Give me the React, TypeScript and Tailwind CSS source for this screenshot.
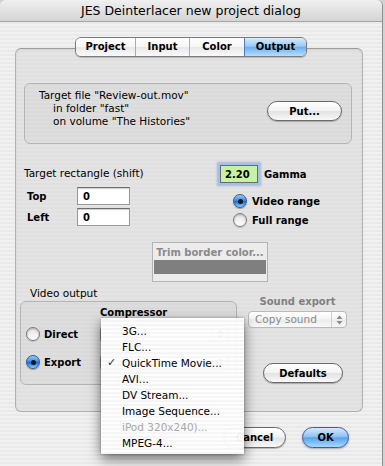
import React from "react";

function Arrows({ color = "#222" }: { color?: string }) {
  return (
    <svg width="7" height="10" viewBox="0 0 7 10">
      <path d="M3.5 0.5 L6.5 4 L0.5 4 Z" fill={color} />
      <path d="M3.5 9.5 L6.5 6 L0.5 6 Z" fill={color} />
    </svg>
  );
}

function Radio({ on }: { on: boolean }) {
  if (on) {
    return (
      <span className="relative shrink-0 w-[14px] h-[14px] rounded-full border border-[#2f5a96] bg-[linear-gradient(180deg,#9ccaf5_0%,#3f8fe6_45%,#1d6bd6_55%,#8cd0ff_100%)] shadow-[0_1px_1px_rgba(0,0,0,0.3)] flex items-center justify-center">
        <span className="w-[5px] h-[5px] rounded-full bg-[#101820]" />
      </span>
    );
  }
  return (
    <span className="shrink-0 w-[14px] h-[14px] rounded-full border border-[#7c7c7c] bg-[linear-gradient(180deg,#e4e4e4,#ffffff)] shadow-[inset_0_1px_2px_rgba(0,0,0,0.25),0_1px_1px_rgba(0,0,0,0.15)]" />
  );
}

function Field({ children }: { children: React.ReactNode }) {
  return (
    <div className="w-[53px] h-[18px] bg-white border border-[#9a9a9a] border-t-[#6e6e6e] shadow-[inset_0_1px_1px_rgba(0,0,0,0.2)] flex items-center pl-[5px] text-[10px] font-bold">
      {children}
    </div>
  );
}

const menuItems: { t: string; check?: boolean; dis?: boolean }[] = [
  { t: "3G..." },
  { t: "FLC..." },
  { t: "QuickTime Movie...", check: true },
  { t: "AVI..." },
  { t: "DV Stream..." },
  { t: "Image Sequence..." },
  { t: "iPod 320x240)...", dis: true },
  { t: "MPEG-4..." },
];

export default function App() {
  return (
    <div className="relative w-[385px] h-[466px] overflow-hidden bg-[#d2d2d2] font-['DejaVu_Sans',sans-serif] text-black">
      <div className="w-[383px] h-[466px] rounded-t-[6px] overflow-hidden border-r border-[#8f8f8f] flex flex-col bg-[repeating-linear-gradient(180deg,#f1f1f1_0px,#f1f1f1_2px,#e9e9e9_2px,#e9e9e9_4px)]">
        {/* Title bar */}
        <div className="h-[22px] shrink-0 flex items-center justify-center border-b border-[#a5a5a5] bg-[linear-gradient(180deg,#f0f0f0,#d4d4d4)] text-[12.5px] leading-[21px]">
          JES Deinterlacer new project dialog
        </div>

        {/* Tabs */}
        <div className="relative z-10 mt-[15px] flex justify-center">
          <div className="flex h-[20px] rounded-[6px] border border-[#7a7a7a] overflow-hidden shadow-[0_1px_1px_rgba(0,0,0,0.2)] text-[10px] font-bold leading-none">
            <div className="w-[60px] flex items-center justify-center border-r border-[#ababab] bg-[linear-gradient(180deg,#ffffff_0%,#f6f6f6_48%,#e8e8e8_52%,#fafafa_100%)]">
              Project
            </div>
            <div className="w-[54px] flex items-center justify-center border-r border-[#ababab] bg-[linear-gradient(180deg,#ffffff_0%,#f6f6f6_48%,#e8e8e8_52%,#fafafa_100%)]">
              Input
            </div>
            <div className="w-[55px] flex items-center justify-center border-r border-[#4d7fc0] bg-[linear-gradient(180deg,#ffffff_0%,#f6f6f6_48%,#e8e8e8_52%,#fafafa_100%)]">
              Color
            </div>
            <div className="w-[61px] flex items-center justify-center bg-[linear-gradient(180deg,#d8ebfc_0%,#9ccaf4_45%,#6eb0ef_52%,#b6defd_100%)]">
              Output
            </div>
          </div>
        </div>

        {/* Panel */}
        <div className="-mt-[9px] ml-[15px] w-[348px] h-[364px] shrink-0 rounded-[6px] border border-[#b0b0b0] border-t-[#9c9c9c] bg-[repeating-linear-gradient(180deg,#e4e4e4_0px,#e4e4e4_2px,#e0e0e0_2px,#e0e0e0_4px)] shadow-[inset_0_1px_2px_rgba(0,0,0,0.08)] flex flex-col">
          {/* Target file box */}
          <div className="mt-[34px] ml-[8px] w-[328px] h-[61px] shrink-0 rounded-[6px] border border-[#b4b4b4] bg-[rgba(0,0,0,0.025)] flex justify-between">
            <div className="pl-[14px] pt-[5px] text-[10.5px] leading-[13px]">
              <div>Target file "Review-out.mov"</div>
              <div className="pl-[14px]">in folder "fast"</div>
              <div className="pl-[14px]">on volume "The Histories"</div>
            </div>
            <div className="mt-[17px] mr-[9px] w-[75px] h-[20px] rounded-full border border-[#6a6a6a] bg-[linear-gradient(180deg,#ffffff_0%,#f3f3f3_48%,#e2e2e2_52%,#f9f9f9_100%)] shadow-[0_1px_1px_rgba(0,0,0,0.25)] flex items-center justify-center text-[10px] font-bold">
              Put...
            </div>
          </div>

          {/* Row A */}
          <div className="mt-[19px] h-[22px] shrink-0 flex items-center">
            <div className="ml-[8px] w-[196px] text-[10.5px]">Target rectangle (shift)</div>
            <div className="w-[38px] h-[18px] bg-[#c9f1a3] border border-[#6a6a6a] shadow-[0_0_0_2px_#9fc1eb,0_0_2px_3px_rgba(80,130,210,0.45)] flex items-center pl-[4px] text-[10px] font-bold">
              2.20
            </div>
            <div className="ml-[6px] text-[10px] font-bold">Gamma</div>
          </div>

          {/* Row B */}
          <div className="mt-[2px] flex shrink-0">
            <div className="ml-[11px] flex flex-col gap-[3px]">
              <div className="flex items-center h-[18px]">
                <span className="w-[50px] text-[10px] font-bold">Top</span>
                <Field>0</Field>
              </div>
              <div className="flex items-center h-[18px]">
                <span className="w-[50px] text-[10px] font-bold">Left</span>
                <Field>0</Field>
              </div>
            </div>
            <div className="ml-[103px] pt-[7px] flex flex-col gap-[5px]">
              <div className="flex items-center h-[14px]">
                <Radio on={true} />
                <span className="ml-[5px] text-[10px] font-bold">Video range</span>
              </div>
              <div className="flex items-center h-[14px]">
                <Radio on={false} />
                <span className="ml-[5px] text-[10px] font-bold">Full range</span>
              </div>
            </div>
          </div>

          {/* Row C: trim border */}
          <div className="mt-[15px] ml-[136px] w-[116px] h-[40px] shrink-0 border border-[#b3b3b3] bg-[#ececec] flex flex-col">
            <div className="pt-[3px] h-[17px] leading-[14px] text-center text-[10px] font-bold text-[#8a8a8a]">
              Trim border color...
            </div>
            <div className="mx-[1px] h-[14px] bg-[#7f7f7f]" />
          </div>

          {/* Row D */}
          <div className="mt-[5px] flex shrink-0">
            <div className="ml-[4px] flex flex-col">
              <div className="pl-[10px] h-[13px] leading-[13px] text-[10.5px]">Video output</div>
              <div className="mt-[1px] w-[217px] h-[84px] rounded-[6px] border border-[#b4b4b4] bg-[rgba(0,0,0,0.025)] flex flex-col">
                <div className="ml-[79px] mt-[4px] leading-[13px] text-[10px] font-bold">Compressor</div>
                <div className="mt-[6px] h-[18px] flex items-center">
                  <div className="ml-[5px] w-[74px] flex items-center">
                    <Radio on={false} />
                    <span className="ml-[4px] text-[10px] font-bold">Direct</span>
                  </div>
                  <div className="w-[128px] h-[17px] rounded-[4px] border border-[#8c8c8c] bg-[linear-gradient(180deg,#ffffff_0%,#f1f1f1_48%,#e3e3e3_52%,#f7f7f7_100%)] flex items-center justify-end">
                    <span className="w-[15px] h-full border-l border-[#b0b0b0] flex items-center justify-center">
                      <Arrows />
                    </span>
                  </div>
                </div>
                <div className="mt-[10px] h-[18px] flex items-center">
                  <div className="ml-[5px] w-[74px] flex items-center">
                    <Radio on={true} />
                    <span className="ml-[4px] text-[10px] font-bold">Export</span>
                  </div>
                  <div className="w-[128px] h-[17px] rounded-[4px] border border-[#8c8c8c] bg-[linear-gradient(180deg,#ffffff_0%,#f1f1f1_48%,#e3e3e3_52%,#f7f7f7_100%)] flex items-center justify-end">
                    <span className="w-[15px] h-full border-l border-[#b0b0b0] flex items-center justify-center">
                      <Arrows />
                    </span>
                  </div>
                </div>
              </div>
            </div>
            <div className="ml-[11px] w-[99px] flex flex-col items-center">
              <div className="mt-[8px] h-[13px] leading-[13px] text-[10px] font-bold text-[#808080]">Sound export</div>
              <div className="mt-[3px] w-[99px] h-[17px] rounded-[4px] border border-[#b9b9b9] bg-[linear-gradient(180deg,#ffffff_0%,#f4f4f4_48%,#ebebeb_52%,#f9f9f9_100%)] flex items-center">
                <span className="flex-1 pl-[6px] text-[10.5px] leading-none text-[#8a8a8a]">Copy sound</span>
                <span className="w-[15px] h-full border-l border-[#cfcfcf] flex items-center justify-center">
                  <Arrows color="#8a8a8a" />
                </span>
              </div>
              <div className="mt-[35px] ml-[15px] self-start w-[80px] h-[20px] rounded-full border border-[#6a6a6a] bg-[linear-gradient(180deg,#ffffff_0%,#f3f3f3_48%,#e2e2e2_52%,#f9f9f9_100%)] shadow-[0_1px_1px_rgba(0,0,0,0.25)] flex items-center justify-center text-[10px] font-bold">
                Defaults
              </div>
            </div>
          </div>
        </div>

        {/* Bottom buttons */}
        <div className="mt-[15px] flex shrink-0">
          <div className="ml-[223px] w-[63px] h-[21px] rounded-full border border-[#6a6a6a] bg-[linear-gradient(180deg,#ffffff_0%,#f3f3f3_48%,#e2e2e2_52%,#f9f9f9_100%)] shadow-[0_1px_1px_rgba(0,0,0,0.25)] flex items-center justify-center text-[10px] font-bold">
            Cancel
          </div>
          <div className="ml-[16px] w-[47px] h-[21px] rounded-full border border-[#36609e] bg-[linear-gradient(180deg,#d5e9fc_0%,#8fc2f2_45%,#5aa3ec_52%,#a9dafe_100%)] shadow-[0_1px_2px_rgba(0,0,0,0.3)] flex items-center justify-center text-[10px] font-bold">
            OK
          </div>
        </div>
      </div>

      {/* Popup menu overlay */}
      <div className="absolute left-[101px] top-[318px] w-[143px] h-[136px] pt-[5px] bg-[repeating-linear-gradient(180deg,rgba(255,255,255,0.96)_0px,rgba(255,255,255,0.96)_2px,rgba(246,246,246,0.96)_2px,rgba(246,246,246,0.96)_4px)] shadow-[0_5px_12px_rgba(0,0,0,0.55),0_0_2px_rgba(0,0,0,0.3)]">
        {menuItems.map((it) => (
          <div key={it.t} className="relative h-[16px] flex items-center pl-[21px] text-[10.5px] leading-none whitespace-nowrap">
            {it.check && <span className="absolute left-[6px] top-[2px] text-[11px] font-bold text-[#333]">✓</span>}
            <span className={it.dis ? "text-[#a8a8a8]" : "text-black"}>{it.t}</span>
          </div>
        ))}
      </div>
    </div>
  );
}
